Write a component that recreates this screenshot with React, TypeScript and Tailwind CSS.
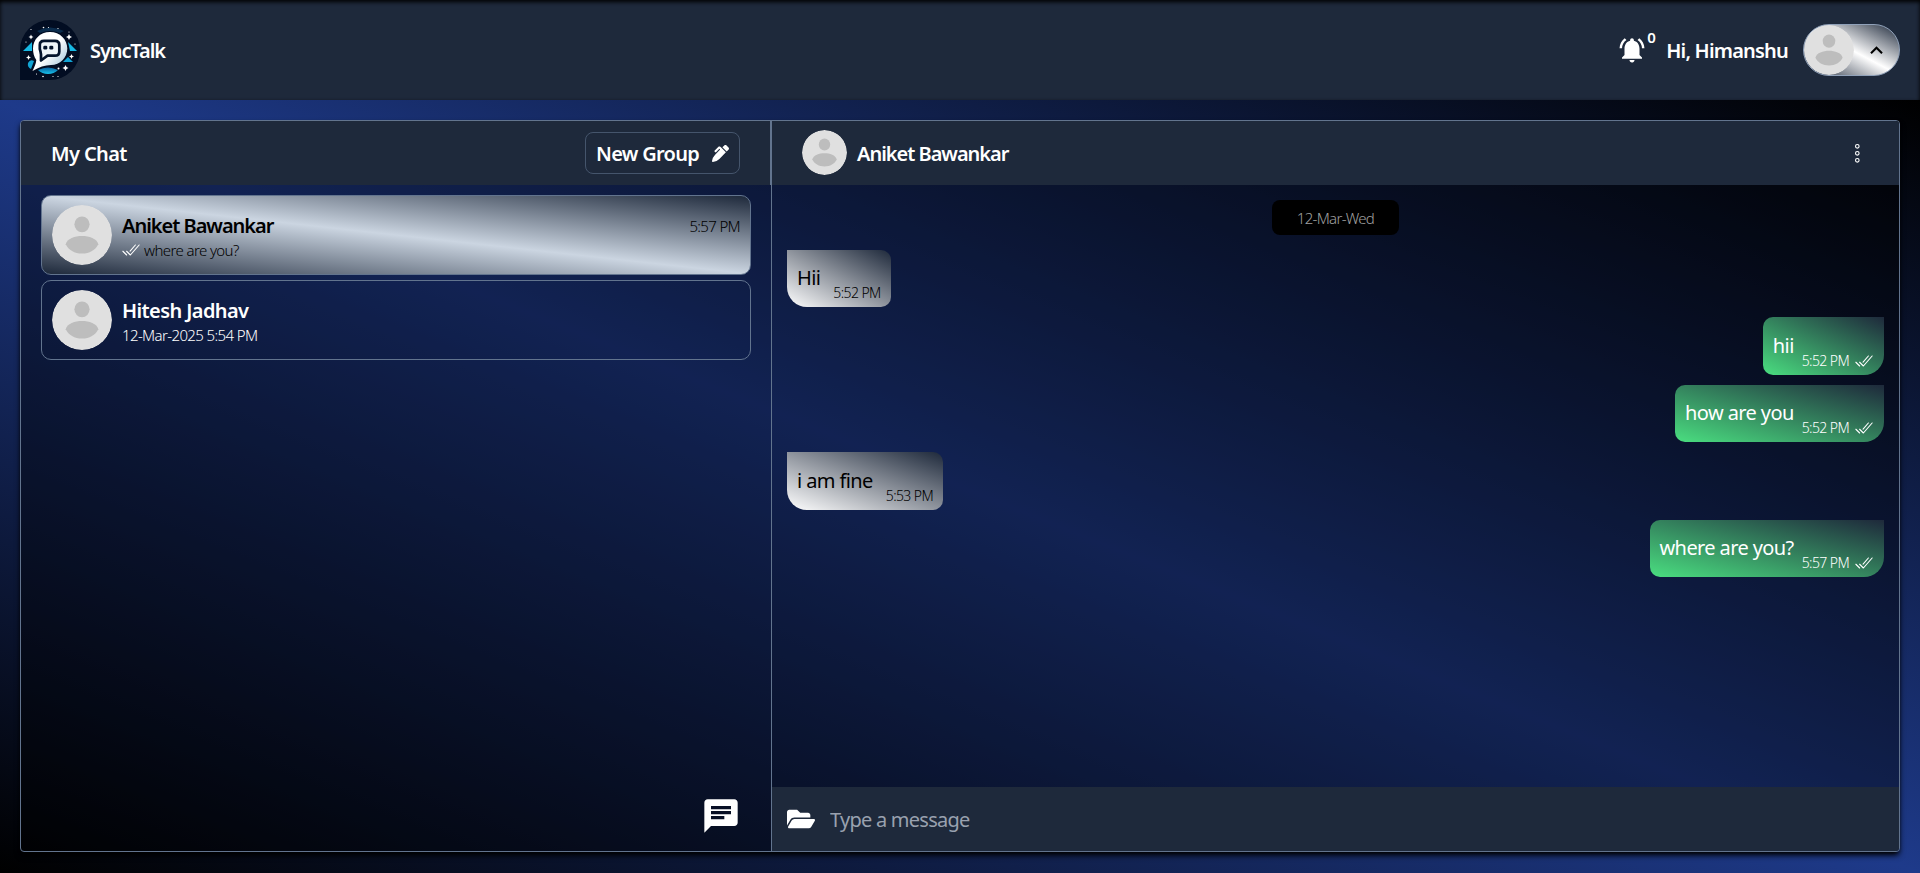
import { MdChat, MdKeyboardArrowUp, MdNotificationsActive } from "react-icons/md";
import { FaFolderOpen, FaPenAlt } from "react-icons/fa";
import { IoCheckmarkDoneOutline } from "react-icons/io5";

type Message = { text: string; time: string; mine: boolean };

const messages: Message[] = [
  { text: "Hii", time: "5:52 PM", mine: false },
  { text: "hii", time: "5:52 PM", mine: true },
  { text: "how are you", time: "5:52 PM", mine: true },
  { text: "i am fine", time: "5:53 PM", mine: false },
  { text: "where are you?", time: "5:57 PM", mine: true },
];

function Avatar({ className }: { className: string }) {
  return (
    <svg viewBox="0 0 60 60" className={`shrink-0 rounded-full ${className}`}>
      <circle cx="30" cy="30" r="30" fill="#e0e0e0" />
      <ellipse cx="30" cy="19.3" rx="7.6" ry="7.9" fill="#bdbdbd" />
      <path
        d="M13.7 39.2C15 33.6 23 31 30 31s15 2.6 16.3 8.2C43.500 45 37.500 48.500 30 48.500S16.500 45 13.700 39.200Z"
        fill="#bdbdbd"
      />
    </svg>
  );
}

function Logo() {
  return (
    <svg viewBox="0 0 60 60" className="size-[60px] shrink-0 rounded-full rounded-bl-none">
      <defs>
        <linearGradient id="bubble" x1="0" y1="0" x2="1" y2="1">
          <stop offset="0.5" stopColor="#ffffff" />
          <stop offset="1" stopColor="#8fb9d2" />
        </linearGradient>
        <linearGradient id="sea" x1="0" y1="0" x2="0" y2="1">
          <stop offset="0" stopColor="#0b5f9c" />
          <stop offset="1" stopColor="#16c4ee" />
        </linearGradient>
      </defs>
      <rect width="60" height="60" fill="#020d22" />
      <path d="M17 11Q30 4 44 11L40 13Q30 9 20 13Z" fill="#0b2c4c" />
      <path d="M3 31L12 22V31Z" fill="#16b8e4" />
      <path d="M48 22L57 31H50Z" fill="#16b8e4" />
      <path d="M43 42L48 37L53 42Z" fill="#12a4d4" />
      <path d="M8 43Q10 39 14 41L11 49Q7 47 8 43Z" fill="#12a4d4" />
      <path d="M18 50Q28 45 38 50Q34 54 28 54T18 50Z" fill="url(#sea)" />
      <path
        d="M30 12C40 12 47.300 19.500 47.300 28.500S40 45 31 45C25 45 19 47 12.500 51C14.500 47 16 43.500 16.300 40C14 37 13 33 13 28.500C13 19.500 20 12 30 12Z"
        fill="url(#bubble)"
      />
      <path
        d="M24 20.800H35Q39.300 20.800 39.300 25V31.500Q39.300 35.700 35 35.700H27.500L21 40.500V34.500Q20.500 31 19.800 29V25Q19.800 20.800 24 20.800Z"
        fill="#eef5f9"
        stroke="#04142c"
        strokeWidth="2.700"
        strokeLinejoin="round"
      />
      <rect x="23.300" y="25.800" width="4" height="3.800" rx="1.300" fill="#04142c" />
      <rect x="29.300" y="25.800" width="4" height="3.800" rx="1.300" fill="#04142c" />
      <g fill="#fff">
        <path d="M11 14.500l.8 1.700 1.700.8-1.700.8-.8 1.700-.8-1.700-1.700-.8 1.700-.8z" />
        <path d="M49 14l1 2 2 1-2 1-1 2-1-2-2-1 2-1z" />
        <path d="M51.500 34l.8 1.700 1.700.8-1.700.8-.8 1.700-.8-1.700-1.700-.8 1.700-.8z" />
        <path d="M45.500 45l1 2 2 1-2 1-1 2-1-2-2-1 2-1z" />
        <path d="M8.500 35l.8 1.700 1.700.8-1.700.8-.8 1.700-.8-1.700-1.700-.8 1.700-.8z" />
        <circle cx="23.500" cy="7.500" r=".8" />
        <circle cx="28.500" cy="7.500" r=".6" />
        <circle cx="38" cy="8.500" r=".6" />
        <circle cx="11" cy="9.500" r=".6" />
        <circle cx="6" cy="22" r=".6" />
        <circle cx="55" cy="24" r=".6" />
        <circle cx="49" cy="12" r=".6" />
        <circle cx="38.500" cy="48.500" r="1" />
        <circle cx="23" cy="56.500" r=".8" />
        <circle cx="33" cy="56.500" r=".6" />
        <circle cx="38" cy="56.500" r=".6" />
        <circle cx="16.500" cy="54" r=".6" />
      </g>
    </svg>
  );
}

function Header() {
  return (
    <header className="flex h-[100px] shrink-0 items-center justify-between bg-[#1e293b] px-5 shadow-[inset_0_2px_4px_0_#000]">
      <div className="flex items-center gap-2.5">
        <Logo />
        <h1 className="pt-0.5 text-[20px] leading-[30px] font-semibold tracking-[-1.1px]">SyncTalk</h1>
      </div>
      <div className="flex items-center">
        <MdNotificationsActive className="size-[30px]" />
        <span className="-mt-[27px] w-[9px] text-[15px] leading-5 font-semibold">0</span>
        <span className="ml-2.5 pt-0.5 text-[20px] leading-[30px] font-semibold tracking-[-0.8px]">Hi, Himanshu</span>
        <button className="ml-[15px] flex h-[52px] w-[97px] items-center rounded-full border border-slate-400 bg-[linear-gradient(to_top_right,#1e293b,#ffffff,#1e293b)]">
          <Avatar className="size-[50px]" />
          <MdKeyboardArrowUp className="ml-2.5 size-[25px] text-black" />
        </button>
      </div>
    </header>
  );
}

function Sidebar() {
  return (
    <section className="flex w-[750px] shrink-0 flex-col">
      <div className="flex h-16 items-center justify-between border-r border-slate-500 bg-[#1e293b] pr-[30px] pl-[30px]">
        <h2 className="pt-0.5 text-[20px] leading-[30px] font-semibold tracking-[-0.6px]">My Chat</h2>
        <button className="flex h-[42px] w-[155px] items-center justify-between rounded-lg border border-slate-600 px-2.5">
          <span className="pt-0.5 text-[20px] leading-[30px] font-semibold tracking-[-0.7px]">New Group</span>
          <FaPenAlt className="size-[17px]" />
        </button>
      </div>
      <div className="flex flex-1 flex-col gap-[5px] px-5 pt-2.5">
        <div className="flex h-20 items-center gap-2.5 rounded-[10px] border border-slate-500 bg-[linear-gradient(to_top_right,#1e293b,#cbd5e1,#1e293b)] px-2.5 text-black">
          <Avatar className="size-[60px]" />
          <div className="flex-1 pt-[3px]">
            <div className="flex items-center justify-between">
              <span className="text-[20px] leading-7 font-semibold tracking-[-1.02px]">Aniket Bawankar</span>
              <span className="text-[15px] leading-6 font-light tracking-[-0.65px]">5:57 PM</span>
            </div>
            <div className="-mt-px flex items-center gap-[3px]">
              <IoCheckmarkDoneOutline className="-ml-px size-5 text-white [&_path]:stroke-[28px]" />
              <span className="text-[15px] leading-[22px] font-light tracking-[-0.6px]">where are you?</span>
            </div>
          </div>
        </div>
        <div className="flex h-20 items-center gap-2.5 rounded-[10px] border border-slate-500 px-2.5">
          <Avatar className="size-[60px]" />
          <div className="flex-1 pt-[3px]">
            <div className="text-[20px] leading-7 font-semibold tracking-[-0.6px]">Hitesh Jadhav</div>
            <div className="-mt-px text-[15px] leading-[22px] font-light tracking-[-0.62px]">12-Mar-2025 5:54 PM</div>
          </div>
        </div>
      </div>
      <div className="flex justify-end pr-[30px] pb-[15px]">
        <MdChat className="size-10" />
      </div>
    </section>
  );
}

function Bubble({ text, time, mine }: Message) {
  return (
    <div
      className={
        mine
          ? "flex h-[57.5px] self-end rounded-l-[10px] rounded-br-[20px] bg-[linear-gradient(to_top_right,#4ade80,#1e293b)] px-2.5 text-white"
          : "flex h-[57.5px] self-start rounded-r-[10px] rounded-bl-[20px] bg-[linear-gradient(to_top_right,#ffffff,#1e293b)] px-2.5 text-black"
      }
    >
      <span className="pt-[13.3px] text-[20px] leading-[30px] tracking-[-0.6px]">{text}</span>
      <span className={mine ? "ml-2 flex items-center gap-[5px] self-end pb-1" : "ml-[13px] flex items-center self-end pb-1"}>
        <span className="text-[14px] leading-5 font-light tracking-[-0.6px]">{time}</span>
        {mine && <IoCheckmarkDoneOutline className="size-5 [&_path]:stroke-[28px]" />}
      </span>
    </div>
  );
}

function Conversation() {
  return (
    <section className="flex flex-1 flex-col border-l border-slate-500">
      <div className="flex h-16 shrink-0 items-center gap-2.5 bg-[#1e293b] px-[30px]">
        <Avatar className="-mt-px size-[45px]" />
        <h2 className="flex-1 pt-0.5 text-[20px] leading-[30px] font-semibold tracking-[-1.02px]">Aniket Bawankar</h2>
        <svg viewBox="0 0 24 24" className="size-6" fill="none" stroke="currentColor" strokeWidth="1.1">
          <circle cx="12.300" cy="5.300" r="1.800" />
          <circle cx="12.300" cy="12.300" r="1.800" />
          <circle cx="12.300" cy="19.300" r="1.800" />
        </svg>
      </div>
      <div className="flex flex-1 flex-col gap-2.5 px-[15px] pt-[15px]">
        <div className="mb-[4.9px] flex h-[35px] w-[127px] items-center justify-center self-center rounded-lg bg-black pt-0.5 text-[15px] font-light tracking-[-0.7px] text-[#a0a0a0]">
          12-Mar-Wed
        </div>
        {messages.map((m, i) => (
          <Bubble key={i} {...m} />
        ))}
      </div>
      <div className="flex h-16 shrink-0 items-center gap-[15px] bg-[#1e293b] px-[15px]">
        <FaFolderOpen className="size-7" />
        <input
          placeholder="Type a message"
          className="flex-1 bg-transparent pt-0.5 text-[20px] leading-[30px] tracking-[-0.75px] outline-none placeholder:text-gray-400"
        />
      </div>
    </section>
  );
}

export default function App() {
  return (
    <div className="flex h-[873px] flex-col overflow-hidden font-['Noto_Sans',sans-serif] text-white">
      <Header />
      <main className="flex-1 bg-[linear-gradient(to_top_right,#000000,#1e3a8a,#000000)] p-5">
        <div className="flex h-[732px] overflow-hidden rounded-sm border border-slate-500 bg-black/40 shadow-[0_4px_6px_-1px_#000,0_2px_4px_-2px_#000]">
          <Sidebar />
          <Conversation />
        </div>
      </main>
    </div>
  );
}
